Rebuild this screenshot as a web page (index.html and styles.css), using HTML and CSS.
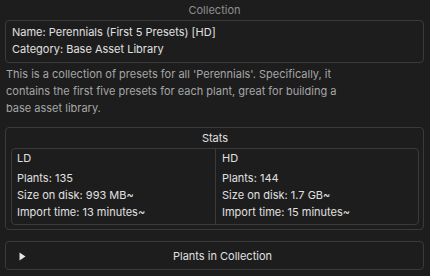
FILE: index.html
```html
<!DOCTYPE html>
<html lang="en">
<head>
    <meta charset="UTF-8">
    <title>Collection</title>
    <link rel="stylesheet" href="styles.css">
</head>
<body>
    <div class="panel">
        <div class="panel-title">Collection</div>

        <div class="box info-box">
            <div class="line">Name: Perennials (First 5 Presets) [HD]</div>
            <div class="line">Category: Base Asset Library</div>
        </div>

        <p class="description">
            This is a collection of presets for all 'Perennials'. Specifically, it<br>
            contains the first five presets for each plant, great for building a<br>
            base asset library.
        </p>

        <div class="box stats-box">
            <div class="stats-title">Stats</div>
            <div class="stats-grid">
                <div class="stats-cell">
                    <div class="cell-title">LD</div>
                    <div class="line">Plants: 135</div>
                    <div class="line">Size on disk: 993 MB~</div>
                    <div class="line">Import time: 13 minutes~</div>
                </div>
                <div class="stats-cell">
                    <div class="cell-title">HD</div>
                    <div class="line">Plants: 144</div>
                    <div class="line">Size on disk: 1.7 GB~</div>
                    <div class="line">Import time: 15 minutes~</div>
                </div>
            </div>
        </div>

        <div class="box toggle-box">
            <svg class="arrow" width="7" height="9" viewBox="0 0 7 9">
                <path d="M0.5 0.5 L6.5 4.5 L0.5 8.5 Z" fill="#e6e6e6"/>
            </svg>
            <span class="toggle-label">Plants in Collection</span>
        </div>
    </div>
</body>
</html>
```

FILE: styles.css
```css
* {
    margin: 0;
    padding: 0;
    box-sizing: border-box;
}

body {
    background-color: #1d1d1d;
    font-family: Inter, "Noto Sans", sans-serif;
    font-size: 11px;
    color: #e0e0e0;
}

.panel {
    padding: 0 6px 0 5px;
}

.panel-title {
    height: 20px;
    line-height: 20px;
    text-align: center;
    color: #8f8f8f;
}

.box {
    border: 1px solid #3a3a3a;
    border-radius: 4px;
}

.line {
    line-height: 17px;
}

.info-box {
    padding: 3px 6px 4px;
}

.description {
    margin-top: 3px;
    padding-left: 1px;
    line-height: 17px;
    color: #a6a6a6;
}

.stats-box {
    margin-top: 10px;
    padding: 0 4px 4px 5px;
}

.stats-title {
    line-height: 20px;
    text-align: center;
}

.stats-grid {
    display: grid;
    grid-template-columns: 1fr 1fr;
    border: 1px solid #3a3a3a;
    border-radius: 4px;
}

.stats-cell {
    padding: 1px 5px 3px;
}

.stats-cell + .stats-cell {
    border-left: 1px solid #3a3a3a;
    padding-left: 6px;
}

.cell-title {
    line-height: 17px;
    margin-bottom: 3px;
}

.toggle-box {
    margin-top: 11px;
    height: 29px;
    padding: 1px 0 0 16px;
    display: flex;
    align-items: center;
    position: relative;
}

.arrow {
    position: absolute;
    left: 13px;
    top: 10px;
}

.toggle-label {
    flex: 1;
    text-align: center;
}
```
